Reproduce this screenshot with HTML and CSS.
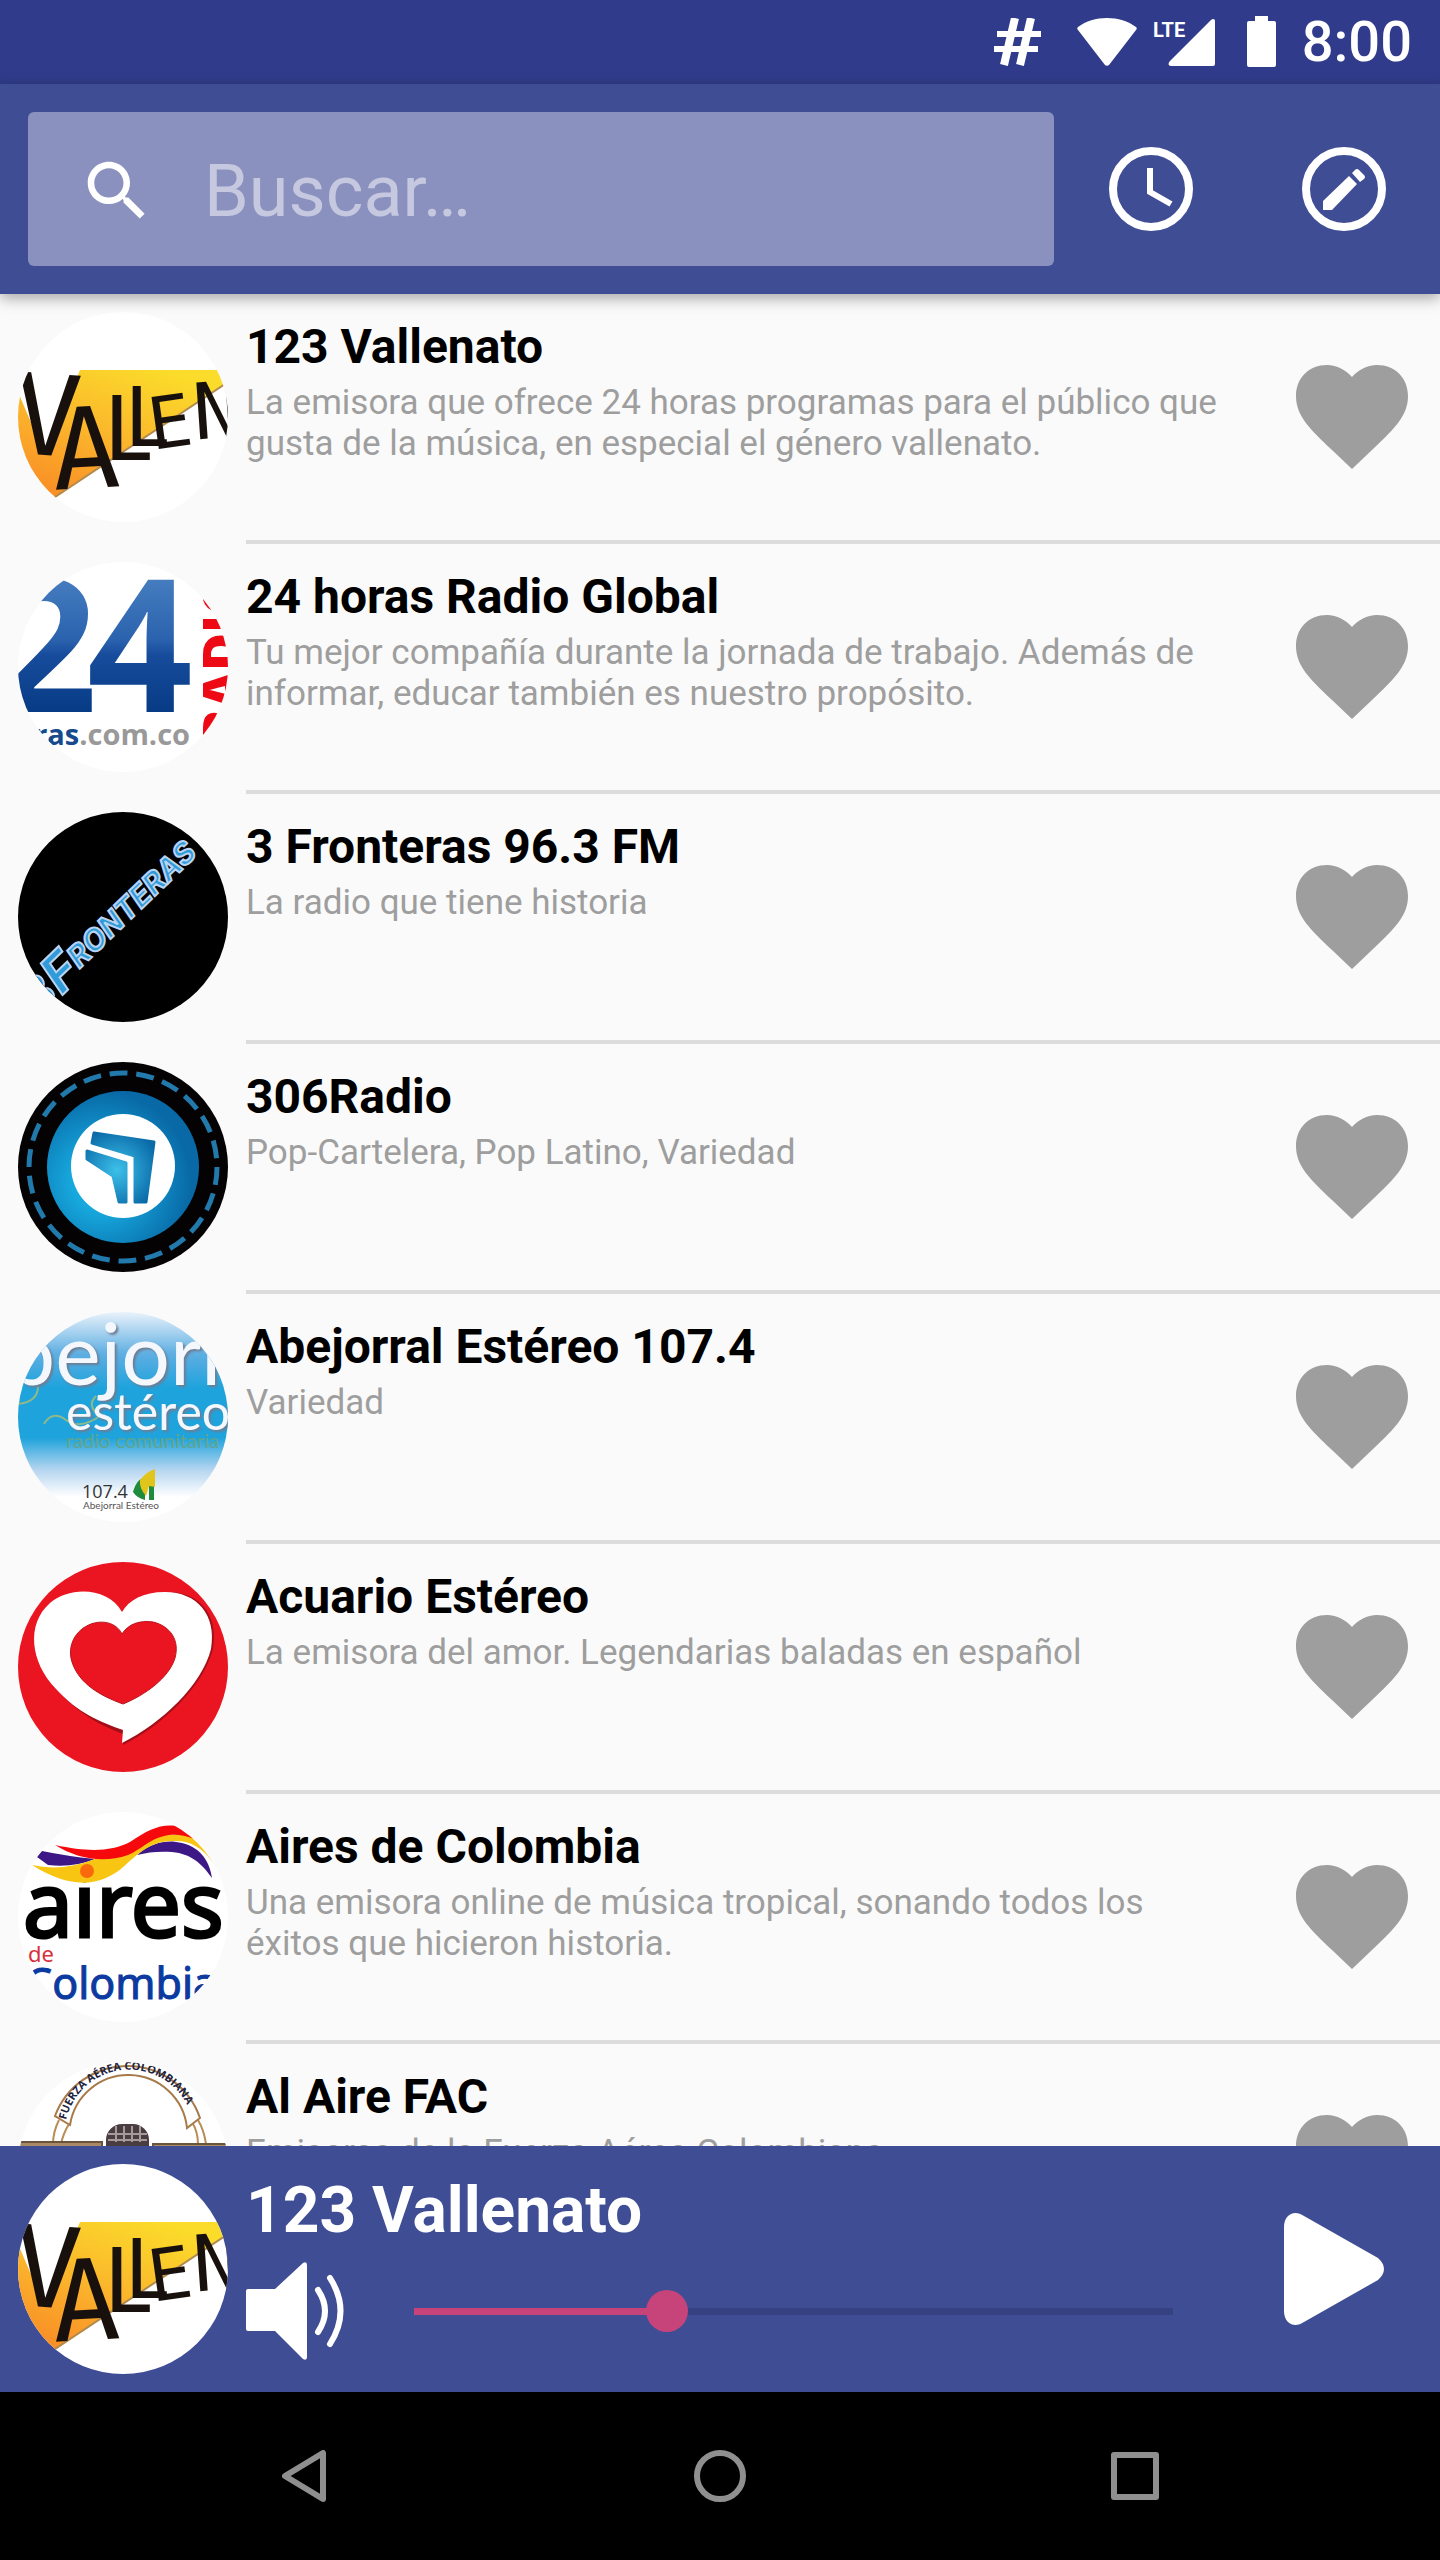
FILE: index.html
```
<!DOCTYPE html>
<html lang="es">
<head>
    <meta charset="UTF-8">
    <meta name="viewport" content="width=device-width, initial-scale=1.0">
    <title>Emisoras</title>
    <link rel="stylesheet" href="styles.css">
</head>
<body>
    <!-- Shared icons -->
    <svg class="sprite" aria-hidden="true">
        <defs>
            <linearGradient id="sun" x1="0.7" y1="0" x2="0.1" y2="1">
                <stop offset="0" stop-color="#fbdc2a"/>
                <stop offset="0.5" stop-color="#fbb62c"/>
                <stop offset="1" stop-color="#f98a25"/>
            </linearGradient>
            <symbol id="heart" viewBox="0 0 112 104">
                <path fill="#9e9e9e" d="M56 104 36 85C14 64 0 51 0 31 0 13 13 0 31 0c10 0 19 5 25 12C62 5 71 0 81 0c18 0 31 13 31 31 0 20-14 33-36 54z"/>
            </symbol>
            <symbol id="vallenato" viewBox="0 0 210 210">
                <rect width="210" height="210" fill="#fff"/>
                <path fill="url(#sun)" d="M0 80 27 143 62 58H210V70L37 186 0 150z"/>
                <path stroke="#b08a50" stroke-width="2" d="M37 185 210 70"/>
                <g class="scrawl">
                    <text x="-7" y="143" font-size="112" transform="rotate(4 27 143)">V</text>
                    <text x="36" y="176" font-size="112" transform="rotate(-3 68 176)">A</text>
                    <text class="lato" x="86" y="148" font-size="92">L</text>
                    <text class="lato" x="107" y="134" font-size="84">L</text>
                    <text x="134" y="137" font-size="72" transform="rotate(-8 142 137)">E</text>
                    <text x="177" y="127" font-size="78" transform="rotate(-4 184 127)">N</text>
                </g>
            </symbol>
        </defs>
    </svg>

    <!-- Status bar -->
    <div class="status-bar">
        <svg width="67" height="48" viewBox="0 0 67 48" fill="none" stroke="#fff" stroke-width="6">
            <path stroke-width="8" d="M21 0 10 47M37 0 26 47"/>
            <path d="M3 16h44M0 31h44"/>
        </svg>
        <svg width="60" height="50" viewBox="0 0 60 50" fill="#fff">
            <path d="M1 10C9 4 19 1 30 1s21 3 29 9c1 1 1 2 0 3L32 48c-1 1-3 1-4 0L1 13c-1-1-1-2 0-3z"/>
        </svg>
        <svg width="78" height="50" viewBox="0 0 78 50" fill="#fff">
            <text class="lte" x="0" y="20">LTE</text>
            <path d="M17 44 58 3c2-2 4-1 4 1v43q0 2-2 2H18c-3 0-3-3-1-5z"/>
        </svg>
        <svg width="39" height="52" viewBox="0 0 39 52" fill="#fff">
            <path d="M8 0h13v5h6q2 0 2 2v42q0 2-2 2H2q-2 0-2-2V7q0-2 2-2h6z"/>
        </svg>
        <span class="time">8:00</span>
    </div>

    <!-- Search -->
    <header class="app-bar">
        <label class="search-box">
            <svg width="78" height="78" viewBox="0 0 24 24" fill="#fff">
                <path d="M15.5 14h-.79l-.28-.27C15.41 12.59 16 11.11 16 9.5 16 5.91 13.09 3 9.5 3S3 5.91 3 9.5 5.91 16 9.5 16c1.61 0 3.09-.59 4.23-1.57l.27.28v.79l5 4.99L20.49 19l-4.99-5zm-6 0C7.01 14 5 11.99 5 9.5S7.01 5 9.5 5 14 7.01 14 9.5 11.99 14 9.5 14z"/>
            </svg>
            <input type="text" placeholder="Buscar…" aria-label="Buscar">
        </label>
        <button class="bar-btn" aria-label="Temporizador">
            <svg width="84" height="84" viewBox="0 0 84 84" fill="none" stroke="#fff">
                <circle cx="42" cy="42" r="38" stroke-width="8"/>
                <path stroke-width="6" d="M41 21v24l21 12"/>
            </svg>
        </button>
        <button class="bar-btn" aria-label="Editar">
            <svg width="84" height="84" viewBox="0 0 84 84">
                <circle cx="42" cy="42" r="38" fill="none" stroke="#fff" stroke-width="8"/>
                <path fill="#fff" d="M21 54 47 29l8 8-25 26h-9zM50 26l3-3q2-2 4 0l5 5q2 2 0 4l-4 3z"/>
            </svg>
        </button>
    </header>

    <!-- Stations -->
    <ul class="stations">
        <li class="station">
            <svg class="logo" viewBox="0 0 210 210"><use href="#vallenato"/></svg>
            <div class="station-body">
                <div class="station-text">
                    <h2>123 Vallenato</h2>
                    <p>La emisora que ofrece 24 horas programas para el público que gusta de la música, en especial el género vallenato.</p>
                </div>
                <button class="fav-btn" aria-label="Favorito"><svg width="112" height="104"><use href="#heart"/></svg></button>
            </div>
        </li>
        <li class="station">
            <svg class="logo" viewBox="0 0 210 210">
                <defs>
                    <linearGradient id="blue24" x1="0" y1="0" x2="0" y2="1">
                        <stop offset="0.2" stop-color="#4c83c3"/>
                        <stop offset="0.5" stop-color="#2a62ae"/>
                        <stop offset="0.56" stop-color="#174c9c"/>
                        <stop offset="0.8" stop-color="#063a84"/>
                    </linearGradient>
                </defs>
                <rect width="210" height="210" fill="#fff"/>
                <text class="open bold" font-size="185" fill="url(#blue24)" y="150"><tspan x="-26">2</tspan><tspan x="69">4</tspan></text>
                <text class="open heavy" font-size="52" fill="#ee0a14" transform="translate(222 182) rotate(-90)">RADIO</text>
                <text class="open bold" font-size="29" x="172" y="183" text-anchor="end" fill="#999"><tspan fill="#164a8c">horas</tspan>.com.co</text>
            </svg>
            <div class="station-body">
                <div class="station-text">
                    <h2>24 horas Radio Global</h2>
                    <p>Tu mejor compañía durante la jornada de trabajo. Además de informar, educar también es nuestro propósito.</p>
                </div>
                <button class="fav-btn" aria-label="Favorito"><svg width="112" height="104"><use href="#heart"/></svg></button>
            </div>
        </li>
        <li class="station">
            <svg class="logo" viewBox="0 0 210 210">
                <rect width="210" height="210" fill="#000"/>
                <g transform="translate(28 199) rotate(-44)" fill="#2f9bd8" stroke="#b9d3f2" stroke-width="2">
                    <text class="neon" font-size="48" x="-10" y="0">3</text>
                    <text class="neon" font-size="52" x="22" y="0">F</text>
                    <text class="neon" font-size="30" x="53" y="-7">RONTERAS</text>
                </g>
            </svg>
            <div class="station-body">
                <div class="station-text">
                    <h2>3 Fronteras 96.3 FM</h2>
                    <p>La radio que tiene historia</p>
                </div>
                <button class="fav-btn" aria-label="Favorito"><svg width="112" height="104"><use href="#heart"/></svg></button>
            </div>
        </li>
        <li class="station">
            <svg class="logo" viewBox="0 0 210 210">
                <defs>
                    <radialGradient id="disc" cx="0.35" cy="0.6" r="0.6">
                        <stop offset="0.3" stop-color="#17a9de"/>
                        <stop offset="1" stop-color="#0869a6"/>
                    </radialGradient>
                    <radialGradient id="arrow" gradientUnits="userSpaceOnUse" cx="99" cy="108" r="42">
                        <stop offset="0" stop-color="#3cc0ea"/>
                        <stop offset="1" stop-color="#0a6ba8"/>
                    </radialGradient>
                </defs>
                <rect width="210" height="210" fill="#050203"/>
                <circle cx="105" cy="105" r="94" fill="none" stroke="#2279ac" stroke-width="5" stroke-dasharray="18 8.8"/>
                <circle cx="105" cy="105" r="76" fill="url(#disc)"/>
                <circle cx="105" cy="104" r="52" fill="#fff"/>
                <path fill="url(#arrow)" stroke="url(#arrow)" stroke-width="3" stroke-linejoin="round" d="M76 71 136 80 128 140H117V94L74 81zM69 89 108 101V140H101L95 114 69 97z"/>
            </svg>
            <div class="station-body">
                <div class="station-text">
                    <h2>306Radio</h2>
                    <p>Pop-Cartelera, Pop Latino, Variedad</p>
                </div>
                <button class="fav-btn" aria-label="Favorito"><svg width="112" height="104"><use href="#heart"/></svg></button>
            </div>
        </li>
        <li class="station">
            <svg class="logo" viewBox="0 0 210 210">
                <defs>
                    <linearGradient id="sky" x1="0" y1="0" x2="0" y2="1">
                        <stop offset="0" stop-color="#e9f2fb"/>
                        <stop offset="0.2" stop-color="#5eaee2"/>
                        <stop offset="0.36" stop-color="#1fa3dc"/>
                        <stop offset="0.6" stop-color="#1fa3dc"/>
                        <stop offset="0.75" stop-color="#b4d5f0"/>
                        <stop offset="0.88" stop-color="#fff"/>
                    </linearGradient>
                </defs>
                <rect width="210" height="210" fill="url(#sky)"/>
                <path fill="none" stroke="#8fb98a" stroke-width="2" d="M0 92q20-2 20-18M26 112q8-14 22-4t34-4q-14-10-4-20"/>
                <g class="lato raised">
                    <text font-size="86" x="-11" y="73">bejorral</text>
                    <text font-size="50" x="48" y="118">estéreo</text>
                </g>
                <text class="lato" font-size="20" x="48" y="136" fill="#5fa58c">radio comunitaria</text>
                <text class="open" font-size="18" x="64" y="186" fill="#333">107.4</text>
                <text class="lato" font-size="10" x="65" y="197" fill="#555">Abejorral Estéreo</text>
                <path fill="#1f8c3c" d="M115 180q4-14 12-14v22q-8-2-12-8zM131 174h5v14h-5z"/>
                <path fill="#e2c51c" d="M122 168q6-8 15-11v18l-6-1-3 10q-7-8-6-16z"/>
            </svg>
            <div class="station-body">
                <div class="station-text">
                    <h2>Abejorral Estéreo 107.4</h2>
                    <p>Variedad</p>
                </div>
                <button class="fav-btn" aria-label="Favorito"><svg width="112" height="104"><use href="#heart"/></svg></button>
            </div>
        </li>
        <li class="station">
            <svg class="logo" viewBox="0 0 210 210">
                <rect width="210" height="210" fill="#ea1520"/>
                <path fill="#a30f18" d="M105 52C90 26 50 26 32 42 9 64 14 103 40 129c22 24 44 35 65 43v11c40-20 80-58 90-96 6-36-15-57-45-57-22 0-37 9-45 22z"/>
                <path fill="#fff" d="M104 50C90 25 52 24 32 41 8 62 12 100 38 127c22 24 44 33 67 41l-1 13c40-20 80-58 89-94 6-34-14-57-46-57-22 0-36 8-43 20z"/>
                <path fill="#ea1520" stroke="#b9141c" stroke-width="1" d="M104 72C98 60 84 58 73 62 57 68 49 84 54 100c7 22 29 34 51 42 22-9 46-26 52-46 5-18-5-32-22-36-13-2-25 2-31 12z"/>
            </svg>
            <div class="station-body">
                <div class="station-text">
                    <h2>Acuario Estéreo</h2>
                    <p>La emisora del amor. Legendarias baladas en español</p>
                </div>
                <button class="fav-btn" aria-label="Favorito"><svg width="112" height="104"><use href="#heart"/></svg></button>
            </div>
        </li>
        <li class="station">
            <svg class="logo" viewBox="0 0 210 210">
                <rect width="210" height="210" fill="#fff"/>
                <text class="noto" font-size="89" x="5" y="125" stroke="#000" stroke-width="3">aires</text>
                <path fill="#3d1785" d="M24 39Q48 44 77 47 55 56 30 53L19 45zM119 43C136 28 152 28 164 31c20 5 28 20 30 35-10-14-20-24-40-26-12-1-24 0-35 3z"/>
                <path fill="#f9c513" d="M14 53Q44 60 77 47 98 46 115 40C130 26 142 20 156 23h16q18 10 23 28C184 34 170 28 155 29 132 29 120 42 104 56 80 76 50 76 14 53z"/>
                <path fill="#f5090c" d="M37 33C70 40 92 40 112 30 130 18 142 12 158 14q9 3 18 13C164 22 154 22 146 24 130 28 124 37 110 43 84 52 58 46 37 33z"/>
                <circle cx="69" cy="59" r="7" fill="#f96a0c"/>
                <text class="noto" font-size="22" x="10" y="150" fill="#d8303a">de</text>
                <text class="noto" font-size="43" x="7" y="187" fill="#0b3aa0" stroke="#0b3aa0">Colombia</text>
            </svg>
            <div class="station-body">
                <div class="station-text">
                    <h2>Aires de Colombia</h2>
                    <p>Una emisora online de música tropical, sonando todos los éxitos que hicieron historia.</p>
                </div>
                <button class="fav-btn" aria-label="Favorito"><svg width="112" height="104"><use href="#heart"/></svg></button>
            </div>
        </li>
        <li class="station">
            <svg class="logo" viewBox="0 0 210 210">
                <defs><path id="arch" d="M48 58A65 65 0 0 1 176 66"/></defs>
                <rect width="210" height="210" fill="#fff"/>
                <path fill="none" stroke="#b98d55" stroke-width="2" d="M35 82q0-12 6-24M43 82q2-10 8-20M180 82q0-12-6-22M188 82q-2-14-8-24"/>
                <path fill="#fff" stroke="#a77a4a" stroke-width="2" d="M37 54A77 77 0 0 1 182 56L169 66A59 59 0 0 0 52 63z"/>
                <text class="open bold" font-size="11" fill="#1d2440"><textPath href="#arch">FUERZA AÉREA COLOMBIANA</textPath></text>
                <rect x="88" y="62" width="43" height="60" rx="16" fill="#4a3d42"/>
                <path stroke="#a79a9c" stroke-width="2" d="M90 72h39M90 78h39M98 64v16M106 64v16M114 64v16M122 64v16"/>
                <path fill="#a98a64" stroke="#6b543c" stroke-width="2" d="M0 80h84v40H0zM135 82h75v40h-75z"/>
            </svg>
            <div class="station-body">
                <div class="station-text">
                    <h2>Al Aire FAC</h2>
                    <p>Emisoras de la Fuerza Aérea Colombiana</p>
                </div>
                <button class="fav-btn" aria-label="Favorito"><svg width="112" height="104"><use href="#heart"/></svg></button>
            </div>
        </li>
    </ul>

    <!-- Player -->
    <footer class="player">
        <svg class="logo" viewBox="0 0 210 210"><use href="#vallenato"/></svg>
        <div class="player-body">
            <h2>123 Vallenato</h2>
            <div class="volume">
                <svg width="98" height="98" viewBox="0 0 98 98" fill="#fff">
                    <path d="M2 27h27L57 1q4-2 4 2v92q0 4-4 2L29 69H2q-2 0-2-2V29q0-2 2-2z"/>
                    <path fill="none" stroke="#fff" stroke-width="6" stroke-linecap="round" d="M72 28q14 21 0 42M84 16q21 33 0 66"/>
                </svg>
                <input type="range" min="0" max="15" value="5" aria-label="Volumen">
            </div>
        </div>
        <button class="play-btn" aria-label="Reproducir">
            <svg width="100" height="112" viewBox="0 0 100 112" fill="#fff">
                <path d="M0 14C0 2 10-4 20 3l74 42q12 11 0 22L20 109C10 116 0 110 0 98z"/>
            </svg>
        </button>
    </footer>

    <!-- System navigation -->
    <nav class="nav-bar">
        <button aria-label="Atrás">
            <svg width="52" height="52" viewBox="0 0 52 52"><path d="M44 3v46L6 26z"/></svg>
        </button>
        <button aria-label="Inicio">
            <svg width="52" height="52" viewBox="0 0 52 52"><circle cx="26" cy="26" r="23"/></svg>
        </button>
        <button aria-label="Recientes">
            <svg width="52" height="52" viewBox="0 0 52 52"><rect x="5" y="5" width="42" height="42"/></svg>
        </button>
    </nav>
</body>
</html>
```
FILE: styles.css
```
* {
    box-sizing: border-box;
}

body {
    margin: 0;
    height: 100vh;
    display: flex;
    flex-direction: column;
    font-family: Roboto, "Liberation Sans", sans-serif;
    background-color: #fafafa;
}

h2, p, ul {
    margin: 0;
    padding: 0;
}

svg {
    display: block;
    flex-shrink: 0;
}

button {
    display: flex;
    justify-content: center;
    align-items: center;
    padding: 0;
    border: none;
    background: transparent;
    cursor: pointer;
}

.sprite {
    position: absolute;
    width: 0;
    height: 0;
}

/* Status bar */
.status-bar {
    display: flex;
    justify-content: flex-end;
    align-items: center;
    gap: 16px;
    flex-shrink: 0;
    height: 84px;
    padding-right: 28px;
    background-color: #303c8b;
    color: white;
}

.time {
    font-size: 56px;
    font-weight: 500;
    line-height: 80px;
}

.lte {
    font-size: 20px;
    font-weight: bold;
}

/* Search bar */
.app-bar {
    position: relative;
    z-index: 1;
    display: flex;
    flex-shrink: 0;
    padding: 28px 0 28px 28px;
    background-color: #3f4d95;
    box-shadow: 0 4px 14px rgba(0, 0, 0, 0.35);
}

.search-box {
    display: flex;
    align-items: center;
    flex: 1;
    min-width: 0;
    gap: 48px;
    height: 154px;
    padding: 4px 50px 0;
    border-radius: 6px;
    background-color: #8a91bf;
}

.search-box input {
    flex: 1;
    min-width: 0;
    padding: 0;
    border: none;
    outline: none;
    background: transparent;
    color: white;
    font-family: inherit;
    font-size: 72px;
}

.search-box input::placeholder {
    color: #c5c8df;
}

.bar-btn {
    flex-shrink: 0;
    width: 193px;
}

/* Station list */
.stations {
    flex: 1;
    min-height: 0;
    overflow-y: auto;
    scrollbar-width: none;
    list-style: none;
}

.station {
    display: flex;
    gap: 18px;
    padding-left: 18px;
}

.logo {
    width: 210px;
    height: 210px;
    margin: 18px 0;
    border-radius: 50%;
}

.station-body {
    display: flex;
    flex-grow: 1;
    gap: 56px;
    height: 250px;
    padding-right: 32px;
    border-bottom: 4px solid #dcdcdc;
}

.station-text {
    flex: 1;
    padding-top: 24px;
}

.station-text h2 {
    font-size: 48px;
    font-weight: bold;
    line-height: 57px;
    color: black;
}

.station-text p {
    margin-top: 7px;
    font-size: 35px;
    line-height: 41px;
    color: #9e9e9e;
}

/* Player */
.player {
    display: flex;
    align-items: center;
    flex-shrink: 0;
    padding: 0 56px 0 18px;
    background-color: #3f4d95;
    color: white;
}

.player-body {
    flex: 1;
    margin: 0 90px 0 18px;
    padding-bottom: 4px;
}

.player-body h2 {
    font-size: 64px;
    line-height: 74px;
}

.volume {
    display: flex;
    align-items: center;
    gap: 49px;
    margin-top: 14px;
}

.volume input {
    flex: 1;
    min-width: 0;
    height: 42px;
    margin: 0;
    appearance: none;
    cursor: pointer;
    background: linear-gradient(to right, #c64479 33%, #354180 33%) center / calc(100% - 42px) 7px no-repeat;
}

.volume input::-webkit-slider-thumb {
    appearance: none;
    width: 42px;
    height: 42px;
    border-radius: 50%;
    background-color: #c64479;
}

/* Navigation */
.nav-bar {
    display: grid;
    grid-template-columns: repeat(3, 1fr);
    flex-shrink: 0;
    height: 168px;
    padding: 0 98px;
    background-color: black;
}

.nav-bar svg {
    fill: none;
    stroke: #8f8f8f;
    stroke-width: 6;
    stroke-linejoin: round;
}

/* Lettering in the station logos */
.scrawl {
    font-family: "DejaVu Sans Mono", "Liberation Mono", monospace;
    fill: #17100c;
}

.open {
    font-family: "Open Sans", sans-serif;
}

.lato {
    font-family: Lato, sans-serif;
}

.raised {
    fill: #f4f8fd;
    filter: drop-shadow(2px 2px 1px #6b7d95);
}

.noto {
    font-family: "Noto Sans", sans-serif;
}

.neon {
    font-family: Inter, sans-serif;
    font-style: italic;
    font-weight: bold;
}

.bold {
    font-weight: bold;
}

.heavy {
    font-weight: 800;
}
```
